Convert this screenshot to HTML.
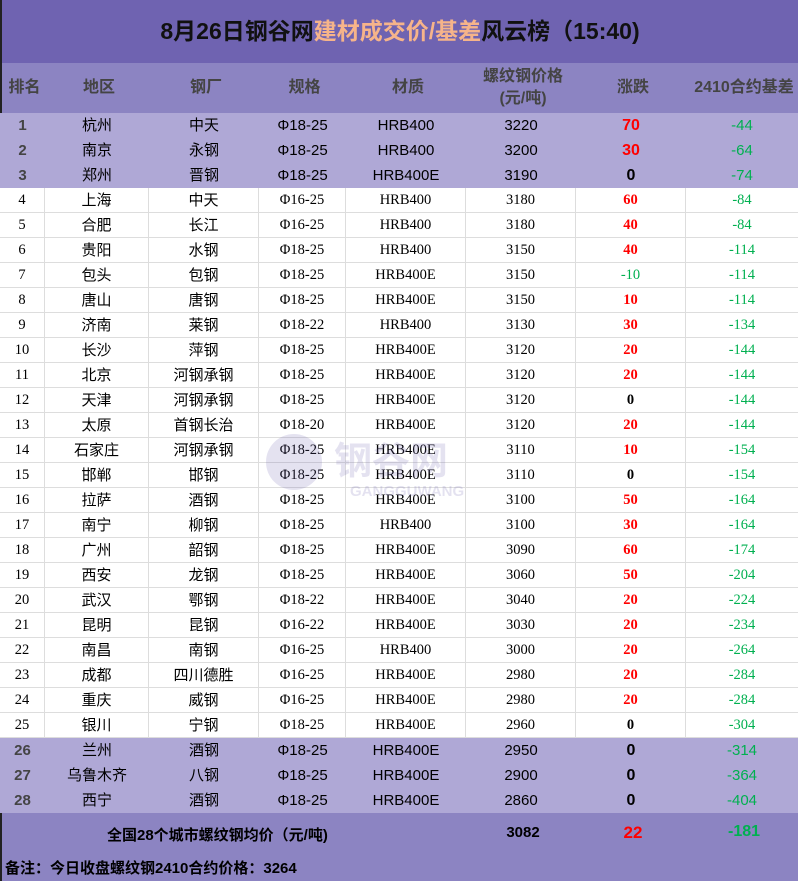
<!DOCTYPE html>
<html><head><meta charset="utf-8"><style>
*{margin:0;padding:0;box-sizing:border-box}
body{width:798px;height:881px;background:#fff;font-family:"Liberation Sans","Noto Sans CJK SC",sans-serif;position:relative;overflow:hidden}
.title{position:absolute;left:0;top:0;width:798px;height:63px;background:#6f63b1;border-left:2px solid #222;text-align:center;font-weight:bold;font-size:23px;line-height:63px;color:#111}
.title span{color:#f6b48a}
.hdr{position:absolute;left:0;top:63px;width:798px;height:50px;background:#8c84c2;border-left:2px solid #222;color:#444;font-weight:bold;font-size:16px}
.hdr div{position:absolute;top:0;height:50px;display:flex;align-items:center;justify-content:center;text-align:center;line-height:22px}
.row{position:absolute;left:0;width:798px;height:25px;font-size:15px}
.row div{position:absolute;top:0;height:25px;line-height:25px;text-align:center}
.p{background:#afa8d6}
.p .c0{font-weight:bold;color:#444}
.w{border-bottom:1px solid #ddd}
.w div{border-right:1px solid #ddd}
.w div:last-child{border-right:none}
.w .n{font-family:"Liberation Serif","Noto Sans CJK SC",serif;font-size:14.5px}
.r{color:#f00;font-weight:bold}
.k{color:#000;font-weight:bold}
.g{color:#00b050}
.sum{position:absolute;left:0;top:813px;width:798px;height:68px;background:#8c84c2;border-left:2px solid #222;font-weight:bold;font-size:15px}
.sum div{position:absolute}
.wm{position:absolute;left:262px;top:430px;width:230px;height:70px;opacity:.18;color:#6f63b1;pointer-events:none}
</style></head><body>
<div class="title">8月26日钢谷网<span>建材成交价/基差</span>风云榜（15:40)</div>
<div class="hdr">
<div style="left:0;width:45px">排名</div>
<div style="left:45px;width:104px">地区</div>
<div style="left:149px;width:110px">钢厂</div>
<div style="left:259px;width:87px">规格</div>
<div style="left:346px;width:120px">材质</div>
<div style="left:466px;width:110px">螺纹钢价格<br>(元/吨)</div>
<div style="left:576px;width:110px">涨跌</div>
<div style="left:686px;width:112px">2410合约基差</div>
</div>
<div id="rows"></div>
<div class="wm"><svg width="230" height="70"><circle cx="32" cy="32" r="28" fill="#6f63b1"/><text x="72" y="44" font-size="38" font-weight="bold" fill="#6f63b1" font-family="Noto Sans CJK SC,sans-serif">钢谷网</text><text x="88" y="66" font-size="15" font-weight="bold" fill="#6f63b1" font-family="Liberation Sans,sans-serif">GANGGUWANG</text></svg></div>
<script>
var d=[["1","杭州","中天","Φ18-25","HRB400","3220","70","-44"],["2","南京","永钢","Φ18-25","HRB400","3200","30","-64"],["3","郑州","晋钢","Φ18-25","HRB400E","3190","0","-74"],
["4","上海","中天","Φ16-25","HRB400","3180","60","-84"],["5","合肥","长江","Φ16-25","HRB400","3180","40","-84"],["6","贵阳","水钢","Φ18-25","HRB400","3150","40","-114"],["7","包头","包钢","Φ18-25","HRB400E","3150","-10","-114"],["8","唐山","唐钢","Φ18-25","HRB400E","3150","10","-114"],["9","济南","莱钢","Φ18-22","HRB400","3130","30","-134"],["10","长沙","萍钢","Φ18-25","HRB400E","3120","20","-144"],["11","北京","河钢承钢","Φ18-25","HRB400E","3120","20","-144"],["12","天津","河钢承钢","Φ18-25","HRB400E","3120","0","-144"],["13","太原","首钢长治","Φ18-20","HRB400E","3120","20","-144"],["14","石家庄","河钢承钢","Φ18-25","HRB400E","3110","10","-154"],["15","邯郸","邯钢","Φ18-25","HRB400E","3110","0","-154"],["16","拉萨","酒钢","Φ18-25","HRB400E","3100","50","-164"],["17","南宁","柳钢","Φ18-25","HRB400","3100","30","-164"],["18","广州","韶钢","Φ18-25","HRB400E","3090","60","-174"],["19","西安","龙钢","Φ18-25","HRB400E","3060","50","-204"],["20","武汉","鄂钢","Φ18-22","HRB400E","3040","20","-224"],["21","昆明","昆钢","Φ16-22","HRB400E","3030","20","-234"],["22","南昌","南钢","Φ16-25","HRB400","3000","20","-264"],["23","成都","四川德胜","Φ16-25","HRB400E","2980","20","-284"],["24","重庆","威钢","Φ16-25","HRB400E","2980","20","-284"],["25","银川","宁钢","Φ18-25","HRB400E","2960","0","-304"],
["26","兰州","酒钢","Φ18-25","HRB400E","2950","0","-314"],["27","乌鲁木齐","八钢","Φ18-25","HRB400E","2900","0","-364"],["28","西宁","酒钢","Φ18-25","HRB400E","2860","0","-404"]];
var L=[0,45,149,259,346,466,576,686,798],h="";
d.forEach(function(r,i){var p=i<3||i>24;var top=113+i*25;
h+='<div class="row '+(p?'p':'w')+'" style="top:'+top+'px">';
for(var j=0;j<8;j++){var c='c'+j;if(!p&&j!=1&&j!=2)c+=' n';
if(j==6)c+=r[6]=="0"?' k':(r[6][0]=="-"?' g':' r');if(j==7)c+=' g';
h+='<div class="'+c+'" style="left:'+L[j]+'px;width:'+(L[j+1]-L[j])+'px'+(p&&j==6?';font-size:16px':'')+'">'+r[j]+'</div>';}
h+='</div>';});
document.getElementById('rows').innerHTML=h;
</script>
<div class="sum">
<div style="left:105px;top:11px">全国28个城市螺纹钢均价（元/吨)</div>
<div style="left:466px;width:110px;text-align:center;top:11px">3082</div>
<div style="left:576px;width:110px;text-align:center;top:10px;color:#f00;font-size:17px">22</div>
<div style="left:686px;width:112px;text-align:center;top:10px;color:#00b050;font-size:16px">-181</div>
<div style="left:3px;top:44px">备注：今日收盘螺纹钢2410合约价格：3264</div>
</div>
</body></html>
